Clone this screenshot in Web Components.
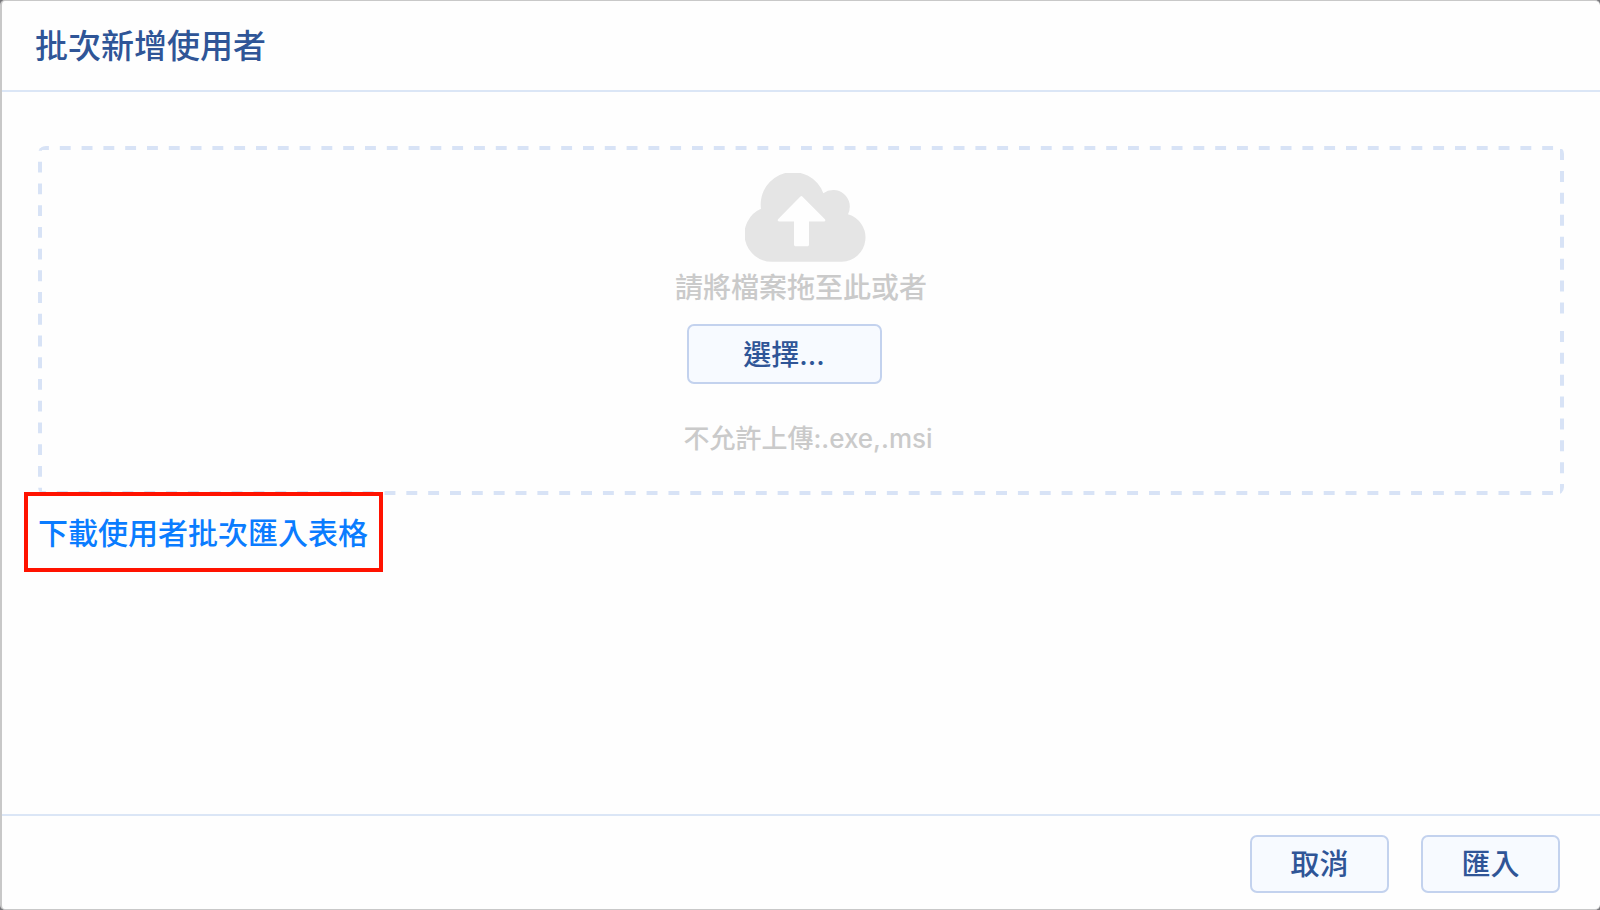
<!DOCTYPE html>
<html lang="zh-Hant">
<head>
<meta charset="utf-8">
<title>批次新增使用者</title>
<style>
  html, body { margin: 0; height: 100%; }
  body {
    background: #77777b;
    color: #2f5597;
    font-family: Inter, "Noto Sans CJK TC", sans-serif;
    font-weight: 500;
  }
</style>
</head>
<body>
<batch-dialog>
  <span slot="title">批次新增使用者</span>
  <file-drop-zone></file-drop-zone>
  <marked-link href="#template">下載使用者批次匯入表格</marked-link>
  <outline-button slot="actions">取消</outline-button>
  <outline-button slot="actions">匯入</outline-button>
</batch-dialog>

<template id="dialog-template">
  <style>
    :host { display: block; }
    section {
      box-sizing: border-box;
      min-height: 100vh;
      display: flex;
      flex-direction: column;
      background: #fefefe;
      border: 1px solid #c8c8c8;
      border-left-width: 2px;
      border-right: 0;
      border-radius: 5px;
    }
    header { padding: 21px 33px 19px; border-bottom: 2px solid #dbe6f6; }
    h1 { margin: 0; font-size: 33px; line-height: 49px; font-weight: 500; }
    main { flex: 1; padding: 54px 36px 32px; }
    footer {
      display: flex;
      justify-content: flex-end;
      gap: 32px;
      padding: 19px 40px 16px;
      border-top: 2px solid #dbe6f6;
    }
  </style>
  <section role="dialog" aria-labelledby="heading">
    <header><h1 id="heading"><slot name="title"></slot></h1></header>
    <main><slot></slot></main>
    <footer><slot name="actions"></slot></footer>
  </section>
</template>

<template id="button-template">
  <style>
    :host { display: inline-block; }
    button {
      box-sizing: border-box;
      min-width: var(--button-width, 139px);
      height: var(--button-height, 58px);
      padding: 2px 16px 0;
      border: 2px solid #c3d2ee;
      border-radius: 7px;
      background: #f7faff;
      color: inherit;
      font: inherit;
      font-size: var(--button-font, 29px);
      line-height: 40px;
      cursor: pointer;
    }
  </style>
  <button type="button"><slot></slot></button>
</template>

<template id="link-template">
  <style>
    :host { display: block; }
    span {
      display: inline-block;
      position: relative;
      z-index: 1;
      margin: -3px 0 0 -14px;
      padding: 15px 11px 12px 10px;
      border: 4px solid #ff1200;
      background: #fefefe;
    }
    a { display: block; color: #0a7cff; font-size: 30px; line-height: 45px; font-weight: 500; text-decoration: none; }
  </style>
  <span><a><slot></slot></a></span>
</template>

<template id="cloud-template">
  <style>
    :host { display: block; }
    svg { display: block; width: 121px; height: 89px; }
  </style>
  <svg viewBox="255 68 363 266" aria-hidden="true">
    <path fill="#e5e5e5" d="M338 334A83 83 0 0 1 303 175A97 97 0 0 1 490 128A50 50 0 0 1 564 191A73 73 0 0 1 546 334Z"/>
    <path fill="#fefefe" stroke="#fefefe" stroke-width="8" stroke-linejoin="round" d="M424 141L357 209H406V283H443V209H492Z"/>
  </svg>
</template>

<template id="drop-template">
  <style>
    :host { display: block; }
    .zone {
      position: relative;
      display: flex;
      flex-direction: column;
      align-items: center;
      box-sizing: border-box;
      min-height: 349px;
      padding: 27px 4px 36px;
      border-radius: 8px;
      overflow: hidden;
      color: #cacaca;
    }
    .dashes { position: absolute; inset: 0; width: 100%; height: 100%; pointer-events: none; }
    .dashes line { stroke: #d8e3f6; stroke-width: 8; stroke-dasharray: 1 1; }
    p { margin: 0; }
    cloud-icon { padding-left: 8px; }
    .hint { font-size: 28px; line-height: 40px; margin-top: 6px; font-weight: 500; }
    outline-button {
      --button-width: 195px;
      --button-height: 60px;
      --button-font: 28px;
      margin: 16px 34px 0 0;
      color: #2f5597;
    }
    .note { font-size: 26px; line-height: 40px; margin-top: 35px; padding-left: 14px; font-weight: 500; }
  </style>
  <div class="zone">
    <svg class="dashes" aria-hidden="true">
      <line x1="0" y1="0" x2="100%" y2="0" pathLength="140"/>
      <line x1="100%" y1="3" x2="100%" y2="48%" pathLength="15"/>
      <line x1="100%" y1="53%" x2="100%" y2="100%" pathLength="15"/>
      <line x1="-3" y1="100%" x2="100%" y2="100%" pathLength="140"/>
      <line x1="0" y1="-6" x2="0" y2="101%" pathLength="33"/>
    </svg>
    <cloud-icon></cloud-icon>
    <p class="hint">請將檔案拖至此或者</p>
    <outline-button>選擇...</outline-button>
    <p class="note">不允許上傳:.exe,.msi</p>
  </div>
</template>

<script>
  class TemplateElement extends HTMLElement {
    constructor() {
      super();
      const template = document.getElementById(this.constructor.templateId);
      this.attachShadow({ mode: 'open' }).append(template.content.cloneNode(true));
    }
  }
  class BatchDialog extends TemplateElement { static templateId = 'dialog-template'; }
  class OutlineButton extends TemplateElement { static templateId = 'button-template'; }
  class CloudIcon extends TemplateElement { static templateId = 'cloud-template'; }
  class FileDropZone extends TemplateElement { static templateId = 'drop-template'; }
  class MarkedLink extends TemplateElement {
    static templateId = 'link-template';
    connectedCallback() {
      this.shadowRoot.querySelector('a').href = this.getAttribute('href') || '#';
    }
  }
  customElements.define('batch-dialog', BatchDialog);
  customElements.define('outline-button', OutlineButton);
  customElements.define('cloud-icon', CloudIcon);
  customElements.define('file-drop-zone', FileDropZone);
  customElements.define('marked-link', MarkedLink);
</script>
</body>
</html>
